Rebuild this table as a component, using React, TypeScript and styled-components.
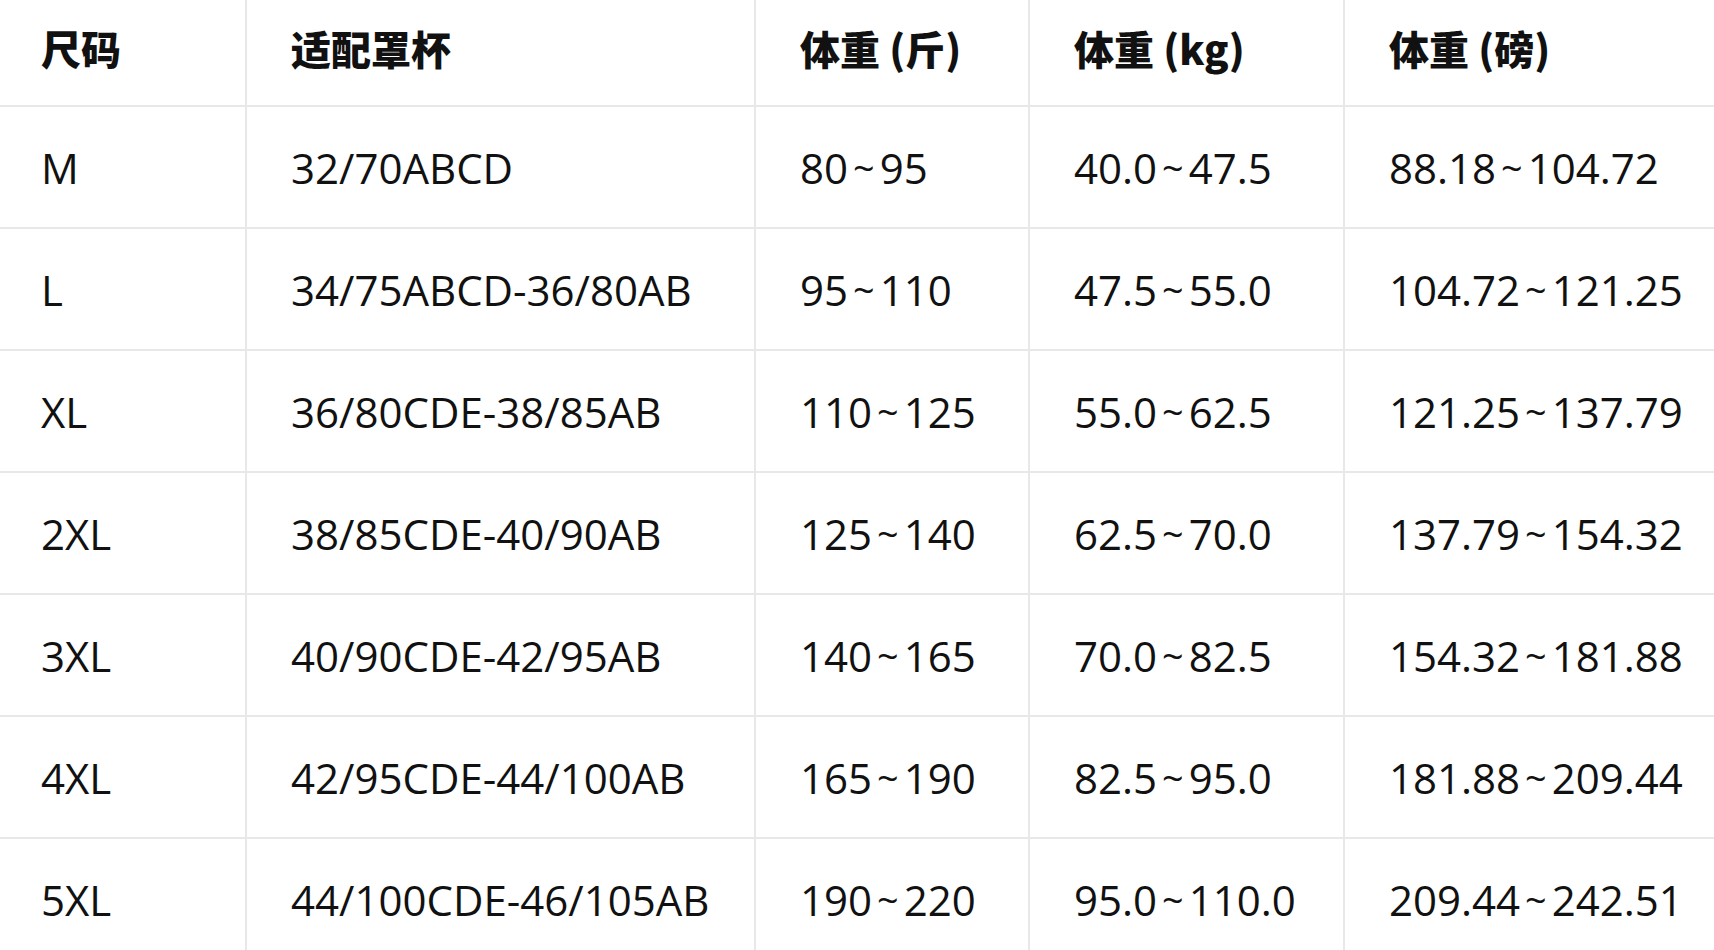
import React from 'react';
import styled, { createGlobalStyle } from 'styled-components';

const GlobalStyle = createGlobalStyle`
  html, body {
    margin: 0;
    padding: 0;
    background: #fff;
  }
  body {
    font-family: 'Open Sans', 'Noto Sans CJK SC', sans-serif;
    color: #111;
    overflow: hidden;
  }
`;

const Table = styled.div`
  width: 100%;
  display: flex;
  flex-direction: column;
`;

const Row = styled.div<{ $head?: boolean }>`
  display: grid;
  grid-template-columns: 245px 509px 274px 315px 1fr;
  height: ${(p) => (p.$head ? '107px' : '122px')};
  box-sizing: border-box;
  border-bottom: 2px solid #e8e8e8;
`;

const Cell = styled.div<{ $head?: boolean; $first?: boolean }>`
  display: flex;
  align-items: center;
  box-sizing: border-box;
  padding-left: ${(p) => (p.$first ? '41px' : '44px')};
  padding-bottom: ${(p) => (p.$head ? '10px' : '0')};
  border-left: ${(p) => (p.$first ? 'none' : '2px solid #e8e8e8')};
  white-space: nowrap;
  font-family: ${(p) =>
    p.$head
      ? "'Noto Sans CJK SC', sans-serif"
      : "'Open Sans', 'Noto Sans CJK SC', sans-serif"};
  font-size: ${(p) => (p.$head ? '40px' : '42px')};
  font-weight: ${(p) => (p.$head ? 900 : 400)};
  color: #111;
`;

const Tilde = styled.span`
  margin: 0 5px;
  font-size: 0.9em;
`;

const headers = ['尺码', '适配罩杯', '体重 (斤)', '体重 (kg)', '体重 (磅)'];

const rows: string[][] = [
  ['M', '32/70ABCD', '80~95', '40.0~47.5', '88.18~104.72'],
  ['L', '34/75ABCD-36/80AB', '95~110', '47.5~55.0', '104.72~121.25'],
  ['XL', '36/80CDE-38/85AB', '110~125', '55.0~62.5', '121.25~137.79'],
  ['2XL', '38/85CDE-40/90AB', '125~140', '62.5~70.0', '137.79~154.32'],
  ['3XL', '40/90CDE-42/95AB', '140~165', '70.0~82.5', '154.32~181.88'],
  ['4XL', '42/95CDE-44/100AB', '165~190', '82.5~95.0', '181.88~209.44'],
  ['5XL', '44/100CDE-46/105AB', '190~220', '95.0~110.0', '209.44~242.51'],
];

function Range({ value }: { value: string }): JSX.Element {
  if (!value.includes('~')) return <>{value}</>;
  const [from, to] = value.split('~');
  return (
    <>
      {from}
      <Tilde>~</Tilde>
      {to}
    </>
  );
}

function App(): JSX.Element {
  return (
    <>
      <GlobalStyle />
      <Table>
        <Row $head>
          {headers.map((h, i) => (
            <Cell key={h} $head $first={i === 0}>
              {h}
            </Cell>
          ))}
        </Row>
        {rows.map((r) => (
          <Row key={r[0]}>
            {r.map((v, i) => (
              <Cell key={i} $first={i === 0}>
                <Range value={v} />
              </Cell>
            ))}
          </Row>
        ))}
      </Table>
    </>
  );
}

export default App;
